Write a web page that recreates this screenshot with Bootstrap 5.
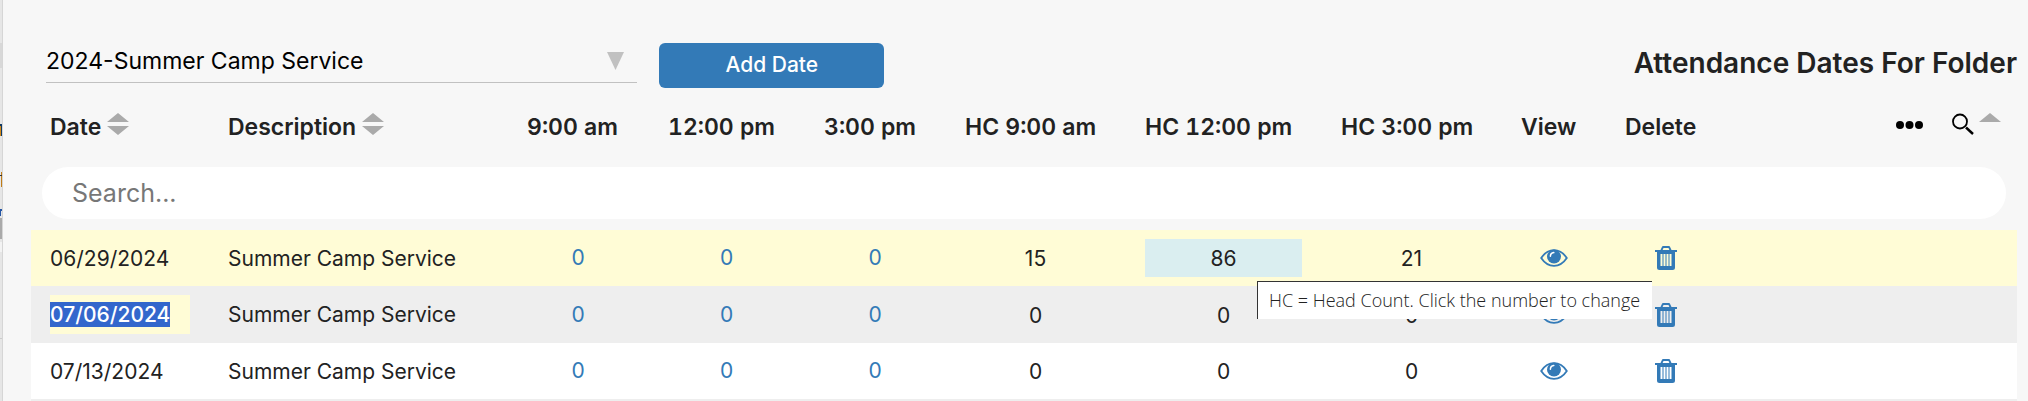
<!DOCTYPE html>
<html lang="en">
<head>
<meta charset="utf-8">
<meta name="viewport" content="width=device-width, initial-scale=1">
<title>Attendance Dates For Folder</title>
<link href="https://cdn.jsdelivr.net/npm/bootstrap@5.3.0/dist/css/bootstrap.min.css" rel="stylesheet">
<style>
body{background:#f7f7f7;color:#222;font-family:Inter,"Liberation Sans",sans-serif;font-size:21px;line-height:25px}
.edge{width:3px;background:#e6e6e6;border-right:1px solid #d6d6d6}
.panel{min-width:0;padding:40px 11px 0 28px}
.toolbar{padding-left:15px;height:52px}
.folder-pick{width:30%;margin-right:22px}
.folder-pick select{appearance:none;border:0;border-bottom:1px solid #c1c1c1;background:transparent;color:#000;font-size:23px;height:43px;padding:1px 40px 0 0;outline:0}
.folder-pick svg{right:13px;top:12px;pointer-events:none}
.btn-add{width:225px;height:45px;margin-top:3px;background:#337ab7;color:#fff;font-size:21px;font-weight:500;border:0;border-radius:6px;padding:0 0 1px}
.btn-add:hover{background:#286090;color:#fff}
.page-title{font-size:28px;line-height:32px;font-weight:600;margin:7px 0 0}
.dates{table-layout:fixed;border-collapse:separate;border-spacing:0;border-bottom:2px solid #eee}
.dates th{font-size:23px;line-height:28px;font-weight:600;font-variant-numeric:tabular-nums;padding:21px 0 0 19px;height:75px;vertical-align:top;white-space:nowrap}
.dates td{padding:9px 20px 9px 19px;text-align:center;white-space:nowrap}
.dates td.find{padding:0 11px 11px}
.c-date{width:178px}.c-desc{width:299px}.c-slot{width:141px}.c-noon{width:156px}
.c-hc{width:180px}.c-hcnoon{width:196px}.c-view{width:104px}.c-del{width:120px}
.find input{height:52px;border:0;border-radius:26px;font-size:25px;padding:0 30px;background:#fff}
.find input::placeholder{color:#777;opacity:1}
.dates tbody tr{background:#fff}
.dates tbody tr.current{background:#fffcd6}
.dates tbody tr.alt{background:#eee}
.dates tbody td.text-start{padding-right:0}
.slot{color:#337ab7;text-decoration:none;display:block;height:38px;line-height:38px}
.cellbox{height:38px;line-height:40px}
.cellbox.hot{background:#daeef0}
.editing{background:#fffcd6;width:140px;height:39px;padding-top:7px}
.editing span{background:#3367cc;color:#fff;font-weight:500;display:inline-block;height:25px}
.ibtn{border:0;background:none;padding:0;color:#337ab7;line-height:0;display:inline-flex;align-items:center;justify-content:center;height:38px}
.sorter{border:0;background:none;padding:0;line-height:0;color:#aaa}
.sort-head{gap:6px}
.tip{left:131px;top:-5px;z-index:3;background:#fff;color:#222;border-top:1px solid #333;border-left:1px solid #333;font-family:"Open Sans","Noto Sans",sans-serif;font-size:18px;font-weight:300;line-height:37px;width:395px;padding-left:11px;text-align:left}
.hc-cell{position:relative}
</style>
</head>
<body>
<svg class="d-none" aria-hidden="true">
  <symbol id="sort" viewBox="0 0 22 22"><path fill="currentColor" d="M0 9 11 0l11 9zM0 13h22l-11 9z"/></symbol>
  <symbol id="eye" viewBox="0 0 28 18"><path d="M1.200 9C4.500 4 9 1.200 14 1.200S23.500 4 26.800 9C23.500 14 19 16.800 14 16.800S4.500 14 1.200 9z" fill="none" stroke="currentColor" stroke-width="1.800"/><circle cx="14" cy="7.600" r="7" fill="currentColor"/><path d="M10.400 7.300c0-2 1.400-3.500 3.400-3.700" fill="none" stroke="#fff" stroke-width="1.500" stroke-linecap="round"/></symbol>
  <symbol id="trash" viewBox="0 0 22 24"><path fill="currentColor" fill-rule="evenodd" d="M0 4h5.500L7 .7Q7.300 0 8 0h6q.7 0 1 .7L16.500 4H22v2h-2v15.500q0 2.500-2.500 2.500h-13Q2 24 2 21.500V6H0zm7.600 0h6.800l-.9-2h-5zM5.500 8v12h2V8zm3 0v12h2V8zm3 0v12h2V8zm3 0v12h2V8z"/></symbol>
</svg>
<div class="d-flex min-vh-100">
  <div class="edge flex-shrink-0" aria-hidden="true">
    <svg class="d-block" width="2" height="399" viewBox="0 0 2 399"><path fill="#d8d8d8" d="M0 43h2v25H0z"/><path fill="#d58a18" d="M0 125h1v11H0z"/><path fill="#113b66" d="M0 124h2v2H0zM1 126h1v10H1z"/><path fill="#c17d16" d="M1 172h1v15H1z"/><path fill="#333" d="M0 175h2v1H0z"/><path fill="#2455a4" d="M0 209h1v7H0zM1 209h1v2H1z"/><path fill="#aaa" d="M0 218h2v21H0z"/><path fill="#f3f3f3" d="M0 242h2v10H0z"/><path fill="#ccc" d="M0 338h2v1H0z"/></svg>
  </div>
  <main class="panel flex-grow-1">
    <div class="toolbar d-flex align-items-start">
      <div class="folder-pick position-relative">
        <select class="w-100 d-block" aria-label="Folder"><option>2024-Summer Camp Service</option></select>
        <svg class="position-absolute" width="17" height="18" viewBox="0 0 17 18"><path fill="#c1c1c1" d="M0 0h17L8.500 18z"/></svg>
      </div>
      <button type="button" class="btn btn-add">Add Date</button>
      <h1 class="page-title ms-auto">Attendance Dates For Folder</h1>
    </div>
    <table class="dates w-100">
      <colgroup><col class="c-date"><col class="c-desc"><col class="c-slot"><col class="c-noon"><col class="c-slot"><col class="c-hc"><col class="c-hcnoon"><col class="c-hc"><col class="c-view"><col class="c-del"><col></colgroup>
      <thead>
        <tr>
          <th scope="col"><div class="sort-head d-flex align-items-start"><span>Date</span><button class="sorter" type="button" aria-label="Sort by date"><svg width="22" height="22"><use href="#sort"/></svg></button></div></th>
          <th scope="col"><div class="sort-head d-flex align-items-start"><span>Description</span><button class="sorter" type="button" aria-label="Sort by description"><svg width="22" height="22"><use href="#sort"/></svg></button></div></th>
          <th scope="col">9:00 am</th><th scope="col">12:00 pm</th><th scope="col">3:00 pm</th>
          <th scope="col">HC 9:00 am</th><th scope="col">HC 12:00 pm</th><th scope="col">HC 3:00 pm</th>
          <th scope="col">View</th><th scope="col">Delete</th>
          <th><div class="d-flex justify-content-end align-items-start pe-3">
            <button class="sorter text-black me-4 pt-2" type="button" aria-label="More"><svg width="32" height="8" viewBox="0 0 32 8"><g fill="currentColor"><circle cx="4" cy="4" r="4"/><circle cx="13.500" cy="4" r="4"/><circle cx="23" cy="4" r="4"/></g></svg></button>
            <button class="sorter text-black me-1" type="button" aria-label="Search"><svg width="23" height="22" viewBox="0 0 23 22"><g fill="none" stroke="currentColor"><circle cx="8" cy="8.500" r="7" stroke-width="1.800"/><path d="m14 14.500 7 6.500" stroke-width="2.400"/></g></svg></button>
            <button class="sorter" type="button" aria-label="Collapse"><svg width="22" height="9"><path fill="currentColor" d="M0 9 11 0l11 9z"/></svg></button>
          </div></th>
        </tr>
        <tr><td class="find" colspan="11"><input class="w-100 d-block" type="search" placeholder="Search..." aria-label="Search"></td></tr>
      </thead>
      <tbody>
        <tr class="current">
          <td class="text-start">06/29/2024</td><td class="text-start">Summer Camp Service</td>
          <td><a class="slot" href="#">0</a></td><td><a class="slot" href="#">0</a></td><td><a class="slot" href="#">0</a></td>
          <td><div class="cellbox">15</div></td><td><div class="cellbox hot">86</div></td><td><div class="cellbox">21</div></td>
          <td><button class="ibtn" type="button" aria-label="View"><svg width="28" height="18"><use href="#eye"/></svg></button></td>
          <td><button class="ibtn" type="button" aria-label="Delete"><svg width="22" height="24"><use href="#trash"/></svg></button></td><td></td>
        </tr>
        <tr class="alt">
          <td class="text-start"><div class="editing"><span>07/06/2024</span></div></td><td class="text-start">Summer Camp Service</td>
          <td><a class="slot" href="#">0</a></td><td><a class="slot" href="#">0</a></td><td><a class="slot" href="#">0</a></td>
          <td><div class="cellbox">0</div></td>
          <td class="hc-cell"><div class="cellbox">0</div><div class="tip position-absolute" role="tooltip">HC = Head Count. Click the number to change</div></td>
          <td><div class="cellbox">0</div></td>
          <td><button class="ibtn" type="button" aria-label="View"><svg width="28" height="18"><use href="#eye"/></svg></button></td>
          <td><button class="ibtn" type="button" aria-label="Delete"><svg width="22" height="24"><use href="#trash"/></svg></button></td><td></td>
        </tr>
        <tr>
          <td class="text-start">07/13/2024</td><td class="text-start">Summer Camp Service</td>
          <td><a class="slot" href="#">0</a></td><td><a class="slot" href="#">0</a></td><td><a class="slot" href="#">0</a></td>
          <td><div class="cellbox">0</div></td><td><div class="cellbox">0</div></td><td><div class="cellbox">0</div></td>
          <td><button class="ibtn" type="button" aria-label="View"><svg width="28" height="18"><use href="#eye"/></svg></button></td>
          <td><button class="ibtn" type="button" aria-label="Delete"><svg width="22" height="24"><use href="#trash"/></svg></button></td><td></td>
        </tr>
      </tbody>
    </table>
  </main>
</div>
<script src="https://cdn.jsdelivr.net/npm/bootstrap@5.3.0/dist/js/bootstrap.bundle.min.js"></script>
</body>
</html>
